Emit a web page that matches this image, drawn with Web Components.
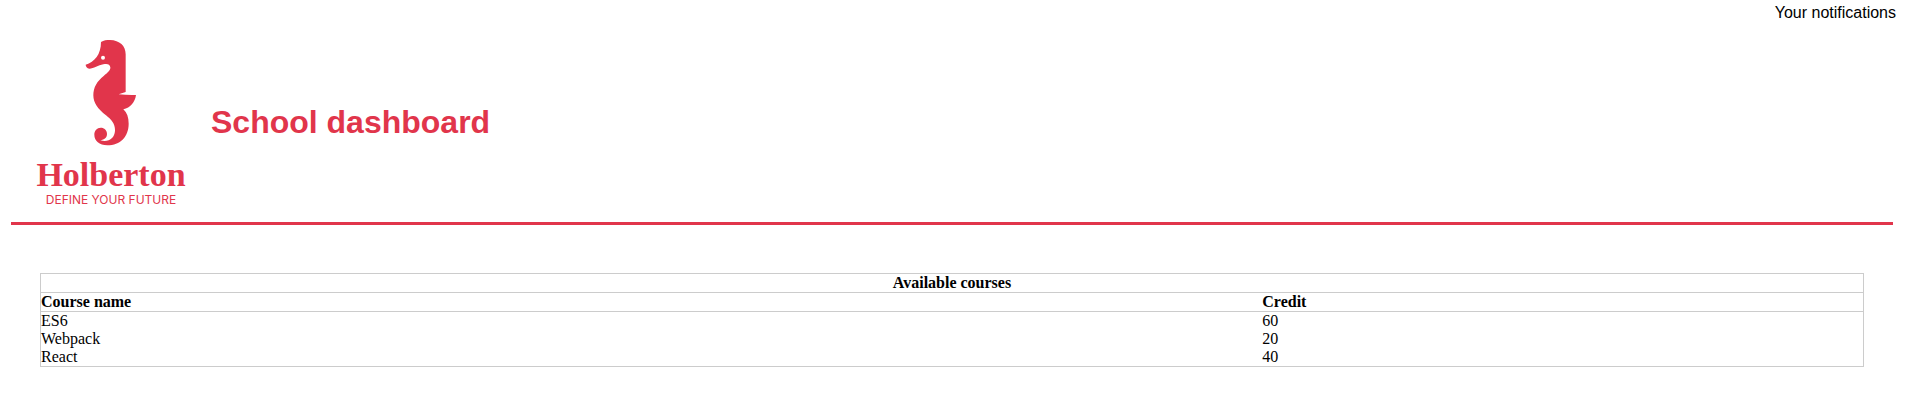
<!DOCTYPE html>
<html lang="en">
<head>
<meta charset="utf-8">
<title>School dashboard</title>
<style>
body { margin: 0; background: #fff; color: #000; font-family: "Liberation Serif", serif; font-size: 16px; }
</style>
</head>
<body>
<school-app></school-app>
<script>
const define = (name, html) => {
  const template = document.createElement('template');
  template.innerHTML = html;
  customElements.define(name, class extends HTMLElement {
    constructor() {
      super();
      this.attachShadow({ mode: 'open' }).append(template.content.cloneNode(true));
    }
  });
};

define('app-notifications', `
<style>
:host { display: block; padding: 3px 9px 0; text-align: right; font: 16px/19px "Liberation Sans", Arial, sans-serif; }
</style>
<slot></slot>`);

define('holberton-logo', `
<style>
:host { display: flex; flex-direction: column; align-items: center; box-sizing: border-box; width: 200px; height: 200px; padding-top: 17px; color: #e1354b; }
svg { display: block; width: 52px; height: 107px; fill: currentColor; }
.name { margin-top: 11px; font: bold 34px/36px "Liberation Serif", serif; }
.tagline { font: 12px/14px Inter, sans-serif; }
</style>
<svg viewBox="256 57 156 321" role="img" aria-label="Seahorse">
  <path d="M304 66C312 61 321 60 331 60C360 61 378 77 378 103V216L357 223Q383 226 409 225C406 247 392 263 371 268C382 278 387 292 387 311C387 350 362 376 323 376C299 375 284 362 284 344C284 332 292 323 303 323C314 323 322 331 322 342C322 353 314 359 302 361C311 364 319 364 327 361C340 355 346 344 346 330C346 312 336 299 319 286C295 267 281 249 281 226C281 202 292 184 312 168C325 157 333 150 332 142C331 133 323 130 311 133C296 136 282 146 269 146C262 145 258 139 258 134C285 126 304 103 304 66Z"/>
  <circle cx="310" cy="113" r="6" fill="#fff"/>
</svg>
<span class="name">Holberton</span>
<span class="tagline">DEFINE YOUR FUTURE</span>`);

define('app-header', `
<style>
:host { display: flex; align-items: center; margin: 0 12px 0 11px; border-bottom: 3px solid #e1354b; }
h1 { margin: 0; color: #e1354b; font: bold 32px/36px "Liberation Sans", Arial, sans-serif; }
</style>
<holberton-logo></holberton-logo>
<h1><slot></slot></h1>`);

define('course-list', `
<style>
:host { display: block; margin: 48px 41px 32px 40px; }
table { width: 100%; border: 1px solid #ccc; border-collapse: collapse; line-height: 18px; }
th, td { padding: 0; text-align: left; }
th { border: 1px solid #ccc; }
tr:nth-child(2) th:first-child { border-right: 0; }
tr:nth-child(2) th:last-child { border-left: 0; }
th[colspan] { text-align: center; }
</style>
<table>
  <thead>
    <tr><th colspan="2">Available courses</th></tr>
    <tr><th>Course name</th><th>Credit</th></tr>
  </thead>
  <tbody>
    <tr><td>ES6</td><td>60</td></tr>
    <tr><td>Webpack</td><td>20</td></tr>
    <tr><td>React</td><td>40</td></tr>
  </tbody>
</table>`);

define('school-app', `
<style>:host { display: block; }</style>
<app-notifications>Your notifications</app-notifications>
<app-header>School dashboard</app-header>
<course-list></course-list>`);
</script>
</body>
</html>
